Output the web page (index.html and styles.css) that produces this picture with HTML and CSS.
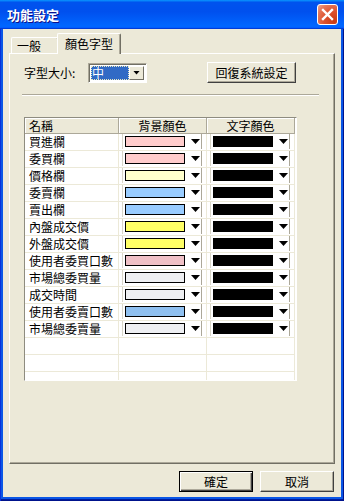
FILE: index.html
```html
<!DOCTYPE html>
<html lang="zh-Hant">
<head>
    <meta charset="UTF-8">
    <meta name="viewport" content="width=device-width, initial-scale=1.0">
    <title>功能設定</title>
    <link rel="stylesheet" href="styles.css">
</head>
<body>
    <div class="window">
        <div class="titlebar">
            <span class="title">功能設定</span>
            <button class="close-button" aria-label="關閉">
                <svg width="13" height="13" viewBox="0 0 13 13">
                    <path d="M2 2L11 11M11 2L2 11" stroke="#fff" stroke-width="2.4" stroke-linecap="square"/>
                </svg>
            </button>
        </div>

        <div class="client">
            <div class="tabs">
                <div class="tab">一般</div>
                <div class="tab active">顏色字型</div>
            </div>

            <div class="panel">
                <div class="font-row">
                    <span class="font-label">字型大小:</span>
                    <div class="combo">
                        <div class="combo-value">中</div>
                        <div class="combo-button"><span class="arrow small"></span></div>
                    </div>
                    <button class="btn reset-button">回復系統設定</button>
                </div>

                <div class="separator"></div>

                <div class="color-grid">
                    <div class="grid-head">
                        <div class="head-cell left">名稱</div>
                        <div class="head-cell">背景顏色</div>
                        <div class="head-cell">文字顏色</div>
                    </div>

                    <div class="grid-body">
                        <div class="grid-row">
                            <div class="cell name">買進欄</div>
                            <div class="cell"><div class="picker"><span class="swatch" style="background:#ffcccc"></span><span class="arrow"></span></div></div>
                            <div class="cell"><div class="picker"><span class="swatch" style="background:#000"></span><span class="arrow"></span></div></div>
                        </div>
                        <div class="grid-row">
                            <div class="cell name">委買欄</div>
                            <div class="cell"><div class="picker"><span class="swatch" style="background:#ffcccc"></span><span class="arrow"></span></div></div>
                            <div class="cell"><div class="picker"><span class="swatch" style="background:#000"></span><span class="arrow"></span></div></div>
                        </div>
                        <div class="grid-row">
                            <div class="cell name">價格欄</div>
                            <div class="cell"><div class="picker"><span class="swatch" style="background:#ffffcc"></span><span class="arrow"></span></div></div>
                            <div class="cell"><div class="picker"><span class="swatch" style="background:#000"></span><span class="arrow"></span></div></div>
                        </div>
                        <div class="grid-row">
                            <div class="cell name">委賣欄</div>
                            <div class="cell"><div class="picker"><span class="swatch" style="background:#99ccff"></span><span class="arrow"></span></div></div>
                            <div class="cell"><div class="picker"><span class="swatch" style="background:#000"></span><span class="arrow"></span></div></div>
                        </div>
                        <div class="grid-row">
                            <div class="cell name">賣出欄</div>
                            <div class="cell"><div class="picker"><span class="swatch" style="background:#99ccff"></span><span class="arrow"></span></div></div>
                            <div class="cell"><div class="picker"><span class="swatch" style="background:#000"></span><span class="arrow"></span></div></div>
                        </div>
                        <div class="grid-row">
                            <div class="cell name">內盤成交價</div>
                            <div class="cell"><div class="picker"><span class="swatch" style="background:#ffff66"></span><span class="arrow"></span></div></div>
                            <div class="cell"><div class="picker"><span class="swatch" style="background:#000"></span><span class="arrow"></span></div></div>
                        </div>
                        <div class="grid-row">
                            <div class="cell name">外盤成交價</div>
                            <div class="cell"><div class="picker"><span class="swatch" style="background:#ffff66"></span><span class="arrow"></span></div></div>
                            <div class="cell"><div class="picker"><span class="swatch" style="background:#000"></span><span class="arrow"></span></div></div>
                        </div>
                        <div class="grid-row">
                            <div class="cell name">使用者委買口數</div>
                            <div class="cell"><div class="picker"><span class="swatch" style="background:#efc0c6"></span><span class="arrow"></span></div></div>
                            <div class="cell"><div class="picker"><span class="swatch" style="background:#000"></span><span class="arrow"></span></div></div>
                        </div>
                        <div class="grid-row">
                            <div class="cell name">市場總委買量</div>
                            <div class="cell"><div class="picker"><span class="swatch" style="background:#eeeff2"></span><span class="arrow"></span></div></div>
                            <div class="cell"><div class="picker"><span class="swatch" style="background:#000"></span><span class="arrow"></span></div></div>
                        </div>
                        <div class="grid-row">
                            <div class="cell name">成交時間</div>
                            <div class="cell"><div class="picker"><span class="swatch" style="background:#eeeff2"></span><span class="arrow"></span></div></div>
                            <div class="cell"><div class="picker"><span class="swatch" style="background:#000"></span><span class="arrow"></span></div></div>
                        </div>
                        <div class="grid-row">
                            <div class="cell name">使用者委賣口數</div>
                            <div class="cell"><div class="picker"><span class="swatch" style="background:#8fc0f0"></span><span class="arrow"></span></div></div>
                            <div class="cell"><div class="picker"><span class="swatch" style="background:#000"></span><span class="arrow"></span></div></div>
                        </div>
                        <div class="grid-row">
                            <div class="cell name">市場總委賣量</div>
                            <div class="cell"><div class="picker"><span class="swatch" style="background:#eeeff2"></span><span class="arrow"></span></div></div>
                            <div class="cell"><div class="picker"><span class="swatch" style="background:#000"></span><span class="arrow"></span></div></div>
                        </div>

                        <!-- empty rows fill the rest of the list -->
                        <div class="grid-row"><div class="cell"></div><div class="cell"></div><div class="cell"></div></div>
                        <div class="grid-row"><div class="cell"></div><div class="cell"></div><div class="cell"></div></div>
                        <div class="grid-row"><div class="cell"></div><div class="cell"></div><div class="cell"></div></div>
                    </div>
                </div>
            </div>

            <div class="footer">
                <button class="btn footer-button default">確定</button>
                <button class="btn footer-button">取消</button>
            </div>
        </div>
    </div>
</body>
</html>
```

FILE: styles.css
```css
* {
    margin: 0;
    padding: 0;
    box-sizing: border-box;
}

body {
    font-family: "Noto Sans CJK TC", "Liberation Sans", sans-serif;
    font-size: 12px;
    color: #000;
    background: #ece9d8;
}

.window {
    width: 344px;
    height: 501px;
    display: flex;
    flex-direction: column;
    padding: 0 3px 4px;
    background: #0a56e6;
    box-shadow: inset 1px 0 #0831d9, inset -1px 0 #00138c, inset 0 -1px #00138c, inset 0 -2px #001ea0;
}

/* title bar */
.titlebar {
    height: 29px;
    margin: 0 -3px;
    display: flex;
    align-items: center;
    justify-content: space-between;
    padding: 0 6px 0 7px;
    background: linear-gradient(180deg, #0997ff, #0053ee 8%, #0050ee 40%, #0066ff 88%, #0066ff 93%, #005bff 95%, #003dd7 96%, #003dd7);
}

.title {
    color: #fff;
    font-size: 13px;
    font-weight: 700;
    line-height: 1;
    text-shadow: 1px 1px #0f1089;
}

.close-button {
    width: 21px;
    height: 21px;
    border: 1px solid #fff;
    border-radius: 3px;
    display: flex;
    align-items: center;
    justify-content: center;
    background: radial-gradient(circle at 85% 85%, #c93a12 0%, #dd5330 45%, #e57556 75%, #f0a890 100%);
}

/* client area */
.client {
    flex: 1;
    display: flex;
    flex-direction: column;
    background: #ece9d8;
}

.tabs {
    display: flex;
    align-items: flex-end;
    height: 21px;
    margin: 4px 0 -1px 8px;
    position: relative;
    z-index: 1;
}

.tab {
    height: 16px;
    width: 48px;
    margin-bottom: 1px;
    padding-left: 5px;
    line-height: 15px;
    background: #ece9d8;
    border: 1px solid #fff;
    border-right-color: #716f64;
    border-bottom: none;
    border-radius: 2px 2px 0 0;
    box-shadow: inset -1px 0 #aca899;
}

.tab.active {
    height: 21px;
    width: 64px;
    margin-left: -2px;
    margin-bottom: 0;
    padding-left: 0;
    text-align: center;
    line-height: 19px;
}

.panel {
    height: 411px;
    border: 1px solid;
    border-color: #fff #716f64 #716f64 #fff;
    box-shadow: inset -1px -1px #aca899;
    margin: 0 6px;
    padding-top: 8px;
}

.font-row {
    display: flex;
    align-items: center;
    height: 21px;
    margin-left: 14px;
}

.font-label {
    width: 64px;
    line-height: 20px;
}

.combo {
    width: 59px;
    height: 20px;
    display: flex;
    padding: 2px;
    background: #fff;
    border: 1px solid;
    border-color: #aca899 #fff #fff #aca899;
    box-shadow: inset 1px 1px #716f64;
}

.combo-value {
    width: 38px;
    height: 14px;
    flex: none;
    padding-left: 1px;
    background: #316ac5;
    color: #fff;
    line-height: 14px;
    outline: 1px dotted #e8e8c0;
    outline-offset: -1px;
}

.combo-button {
    width: 15px;
    height: 14px;
    flex: none;
    display: flex;
    align-items: center;
    justify-content: center;
    background: #ece9d8;
    border: 1px solid;
    border-color: #fff #716f64 #716f64 #fff;
}

.btn {
    font-family: inherit;
    font-size: 12px;
    color: #000;
    background: #ece9d8;
    border: 1px solid;
    border-color: #fff #404040 #404040 #fff;
    box-shadow: inset -1px -1px #aca899;
    line-height: 1;
}

.reset-button {
    width: 89px;
    height: 21px;
    margin-left: 60px;
}

.separator {
    width: 297px;
    height: 2px;
    margin: 11px 0 0 12px;
    border-top: 1px solid #aca899;
    border-bottom: 1px solid #fff;
}

/* colour list */
.color-grid {
    width: 273px;
    height: 264px;
    margin: 21px 0 0 14px;
    background: #fff;
    border: 1px solid;
    border-color: #8e8c80 #fff #fff #8e8c80;
    overflow: hidden;
}

.grid-head,
.grid-row {
    display: grid;
    grid-template-columns: 94px 88px 88px;
}

.head-cell {
    height: 16px;
    line-height: 15px;
    text-align: center;
    background: #ece9d8;
    border-right: 1px solid #aca899;
    border-bottom: 1px solid #aca899;
    box-shadow: inset 1px 1px #fff;
}

.head-cell.left {
    text-align: left;
    padding-left: 4px;
}

.grid-row {
    height: 17px;
}

.cell {
    border-right: 1px solid #ece9d8;
    border-bottom: 1px solid #ece9d8;
    padding: 0 0 0 3px;
}

.cell.name {
    line-height: 16px;
    padding-left: 4px;
}

.picker {
    width: 80px;
    height: 15px;
    display: flex;
    align-items: center;
    padding-left: 2px;
    border-left: 1px solid #d8d5c8;
    border-right: 1px solid #aca899;
}

.swatch {
    width: 60px;
    height: 11px;
    border: 1px solid #000;
}

.arrow {
    width: 9px;
    height: 5px;
    margin-left: 6px;
    background: #000;
    clip-path: polygon(0 0, 100% 0, 50% 100%);
}

.arrow.small {
    width: 7px;
    height: 4px;
    margin-left: 0;
}

/* dialog buttons */
.footer {
    display: flex;
    justify-content: flex-end;
    gap: 7px;
    padding: 7px 7px 0 0;
}

.footer-button {
    width: 74px;
    height: 21px;
}

.footer-button.default {
    border: 1px solid #000;
    box-shadow: inset 1px 1px #fff, inset -1px -1px #404040, inset -2px -2px #aca899;
}
```
